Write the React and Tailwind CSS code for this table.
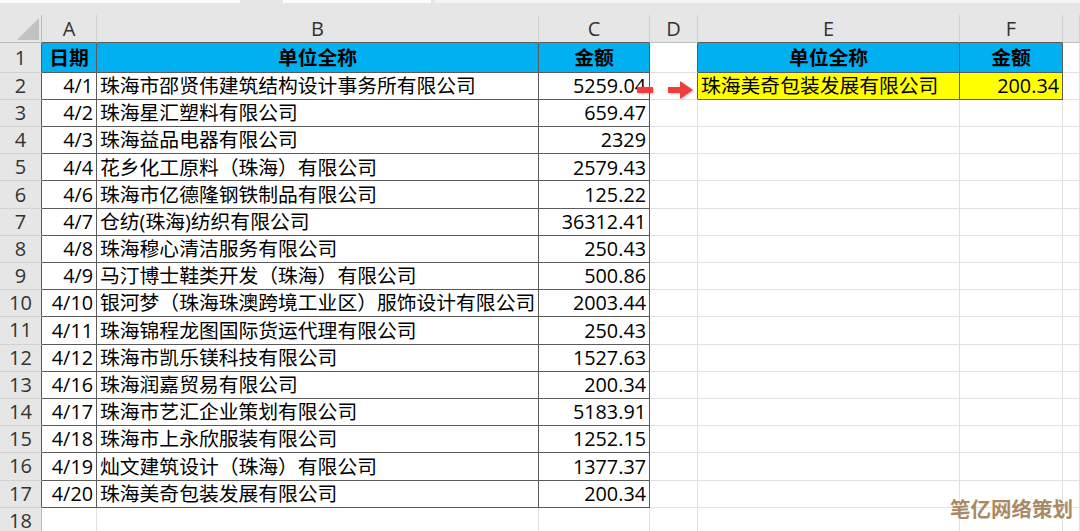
import React from 'react';

const rows = [
    ['4/1', '珠海市邵贤伟建筑结构设计事务所有限公司', '5259.04'],
    ['4/2', '珠海星汇塑料有限公司', '659.47'],
    ['4/3', '珠海益品电器有限公司', '2329'],
    ['4/4', '花乡化工原料（珠海）有限公司', '2579.43'],
    ['4/6', '珠海市亿德隆钢铁制品有限公司', '125.22'],
    ['4/7', '仓纺(珠海)纺织有限公司', '36312.41'],
    ['4/8', '珠海穆心清洁服务有限公司', '250.43'],
    ['4/9', '马汀博士鞋类开发（珠海）有限公司', '500.86'],
    ['4/10', '银河梦（珠海珠澳跨境工业区）服饰设计有限公司', '2003.44'],
    ['4/11', '珠海锦程龙图国际货运代理有限公司', '250.43'],
    ['4/12', '珠海市凯乐镁科技有限公司', '1527.63'],
    ['4/16', '珠海润嘉贸易有限公司', '200.34'],
    ['4/17', '珠海市艺汇企业策划有限公司', '5183.91'],
    ['4/18', '珠海市上永欣服装有限公司', '1252.15'],
    ['4/19', '灿文建筑设计（珠海）有限公司', '1377.37'],
    ['4/20', '珠海美奇包装发展有限公司', '200.34'],
];

const letters = ['', 'A', 'B', 'C', 'D', 'E', 'F', ''];

// cells with the thin dark border: A1:C17 and E1:F2
const inTable = (r, c) =>
    (r >= 1 && r <= 17 && c >= 1 && c <= 3) || (r >= 1 && r <= 2 && (c === 5 || c === 6));

// what sits in a cell: [text, align, bold, fill]
const cellContent = (r, c) => {
    if (r === 1) {
        if (c === 1) return ['日期', 'center', true, 'cyan'];
        if (c === 2 || c === 5) return ['单位全称', 'center', true, 'cyan'];
        if (c === 3 || c === 6) return ['金额', 'center', true, 'cyan'];
        return ['', 'left', false, ''];
    }
    if (r >= 2 && r <= 17) {
        const row = rows[r - 2];
        if (c === 1) return [row[0], 'right', false, ''];
        if (c === 2) return [row[1], 'left', false, ''];
        if (c === 3) return [row[2], 'right', false, ''];
    }
    if (r === 2) {
        if (c === 5) return ['珠海美奇包装发展有限公司', 'left', false, 'yellow'];
        if (c === 6) return ['200.34', 'right', false, 'yellow'];
    }
    return ['', 'left', false, ''];
};

const Arrow = () => (
    <svg
        className="absolute left-[634px] top-[78px] drop-shadow-[1px_1px_1px_rgba(0,0,0,0.25)]"
        width="62"
        height="24"
        viewBox="0 0 62 24"
    >
        <rect x="3" y="9" width="16" height="6" rx="1" fill="#ee3d3d" />
        <rect x="34" y="9" width="13" height="6" fill="#ee3d3d" />
        <polygon points="46,3 59,12 46,21" fill="#ee3d3d" />
    </svg>
);

const App = () => {
    const cells = [];

    for (let r = 0; r <= 18; r++) {
        for (let c = 0; c <= 7; c++) {
            const key = `${r}-${c}`;

            if (r === 0 && c === 0) {
                cells.push(
                    <div key={key} className="bg-[#e6e6e6] border-r border-b border-r-[#bdbdbd] border-b-[#bdbdbd] flex items-end justify-end pr-[2px] pb-[2px]">
                        <svg width="22" height="22" viewBox="0 0 22 22">
                            <polygon points="22,0 22,22 0,22" fill="#c2c2c2" />
                        </svg>
                    </div>
                );
                continue;
            }

            if (r === 0) {
                cells.push(
                    <div
                        key={key}
                        className={`bg-[#e6e6e6] border-r border-b border-r-[#d0d0d0] flex items-center justify-center text-[20px] text-[#333] ${inTable(1, c) ? 'border-b-[#5b5b5b]' : 'border-b-[#bdbdbd]'}`}
                    >
                        {letters[c]}
                    </div>
                );
                continue;
            }

            if (c === 0) {
                cells.push(
                    <div
                        key={key}
                        className={`bg-[#e6e6e6] border-r border-b border-b-[#d2d2d2] flex items-center justify-center text-[20px] text-[#333] ${inTable(r, 1) ? 'border-r-[#5b5b5b]' : 'border-r-[#bdbdbd]'}`}
                    >
                        {r}
                    </div>
                );
                continue;
            }

            const [text, align, bold, fill] = cellContent(r, c);
            const darkR = inTable(r, c) || inTable(r, c + 1);
            const darkB = inTable(r, c) || inTable(r + 1, c);

            cells.push(
                <div
                    key={key}
                    className={`border-r border-b flex items-center whitespace-nowrap text-[19.8px] text-black px-[3px] ${darkR ? 'border-r-[#5b5b5b]' : 'border-r-[#e1e1e1]'} ${darkB ? 'border-b-[#5b5b5b]' : 'border-b-[#e1e1e1]'} ${fill === 'cyan' ? 'bg-[#00b0f0]' : fill === 'yellow' ? 'bg-[#ffff00]' : 'bg-white'} ${align === 'center' ? 'justify-center' : align === 'right' ? 'justify-end' : 'justify-start'} ${bold ? 'font-bold' : ''}`}
                >
                    {text}
                </div>
            );
        }
    }

    return (
        <div className="relative w-[1080px] h-[531px] overflow-hidden bg-[#e6e6e6] font-['Open_Sans','Noto_Sans_CJK_SC',sans-serif]">
            {/* strip left from the formula bar */}
            <div className="flex h-[15px]">
                <div className="w-[240px] h-[3px] bg-white" />
                <div className="w-[43px]" />
                <div className="w-[148px] h-[3px] bg-white" />
                <div className="w-[4px]" />
                <div className="flex-1 h-[3px] bg-[#f4f4f4]" />
            </div>

            {/* sheet */}
            <div className="grid grid-cols-[42px_55px_442px_111px_48px_262px_103px_1fr] grid-rows-[28.3px_29.4px_repeat(17,27.2px)]">
                {cells}
            </div>

            <Arrow />

            <div className="absolute right-[7px] bottom-[7px] text-[20.5px] font-bold text-[#a98a67] font-['Noto_Sans_CJK_SC',sans-serif] [text-shadow:0_0_2px_#fff]">
                笔亿网络策划
            </div>
        </div>
    );
};

export default App;
